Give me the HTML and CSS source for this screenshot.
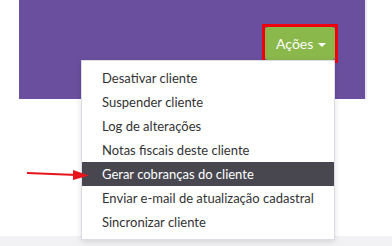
FILE: index.html
```html
<!DOCTYPE html>
<html lang="pt-BR">

<head>
  <meta charset="UTF-8">
  <meta name="viewport" content="width=device-width, initial-scale=1.0">
  <title>Ações do cliente</title>
  <link rel="stylesheet" href="styles.css">
</head>

<body>
  <div class="page">
    <div class="header">
      <div class="actions">
        <div class="mark">
          <button class="btn">Ações <span class="caret"></span></button>
        </div>
        <ul class="menu">
          <li>Desativar cliente</li>
          <li>Suspender cliente</li>
          <li>Log de alterações</li>
          <li>Notas fiscais deste cliente</li>
          <li class="active">Gerar cobranças do cliente</li>
          <li>Enviar e-mail de atualização cadastral</li>
          <li>Sincronizar cliente</li>
        </ul>
      </div>
    </div>
    <div class="strip"></div>

    <svg class="arrow" width="70" height="14" viewBox="0 0 70 14">
      <line x1="2" y1="6" x2="52" y2="8" stroke="#e8141b" stroke-width="2.2" />
      <polygon points="48,3 64,8.5 48,13" fill="#e8141b" />
    </svg>
  </div>
</body>

</html>
```

FILE: styles.css
```css
body {
  margin: 0;
  padding: 0;
  font-family: Lato, "Open Sans", Arial, sans-serif;
  background: #fff;
}

.page {
  position: relative;
  width: 392px;
  height: 246px;
  overflow: hidden;
}

.header {
  margin-left: 19px;
  width: 346px;
  height: 99px;
  background: #6a4f9e;
  border-right: 2px solid #ececf0;
  display: flex;
  justify-content: flex-end;
}

.actions {
  position: relative;
  margin-top: 24px;
  margin-right: 27px;
}

/* red annotation box around the button */
.mark {
  border: 3px solid #f0000f;
  line-height: 0;
}

.btn {
  width: 70px;
  height: 33px;
  background-color: #8ab84b;
  color: white;
  border: none;
  border-radius: 3px;
  font-family: Lato, Arial, sans-serif;
  font-size: 14px;
  line-height: 33px;
  padding: 0 0 0 2px;
  cursor: pointer;
}

.caret {
  display: inline-block;
  width: 0;
  height: 0;
  margin-left: 1px;
  vertical-align: middle;
  border-left: 4px solid transparent;
  border-right: 4px solid transparent;
  border-top: 4px solid white;
}

.menu {
  position: absolute;
  top: 36px;
  right: 3px;
  width: 252px;
  margin: 0;
  padding: 5px 0;
  list-style: none;
  background: white;
  border: 1px solid #dcdce4;
  box-shadow: 0 2px 6px rgba(0, 0, 0, 0.12);
  z-index: 2;
}

.menu li {
  height: 24px;
  line-height: 24px;
  padding-left: 20px;
  font-size: 13px;
  color: #333;
  white-space: nowrap;
}

.menu li.active {
  background: #48474f;
  color: white;
}

.strip {
  margin-top: 137px;
  height: 10px;
  background: #f2f2f4;
}

.arrow {
  position: absolute;
  left: 25px;
  top: 167px;
  z-index: 3;
}
```
